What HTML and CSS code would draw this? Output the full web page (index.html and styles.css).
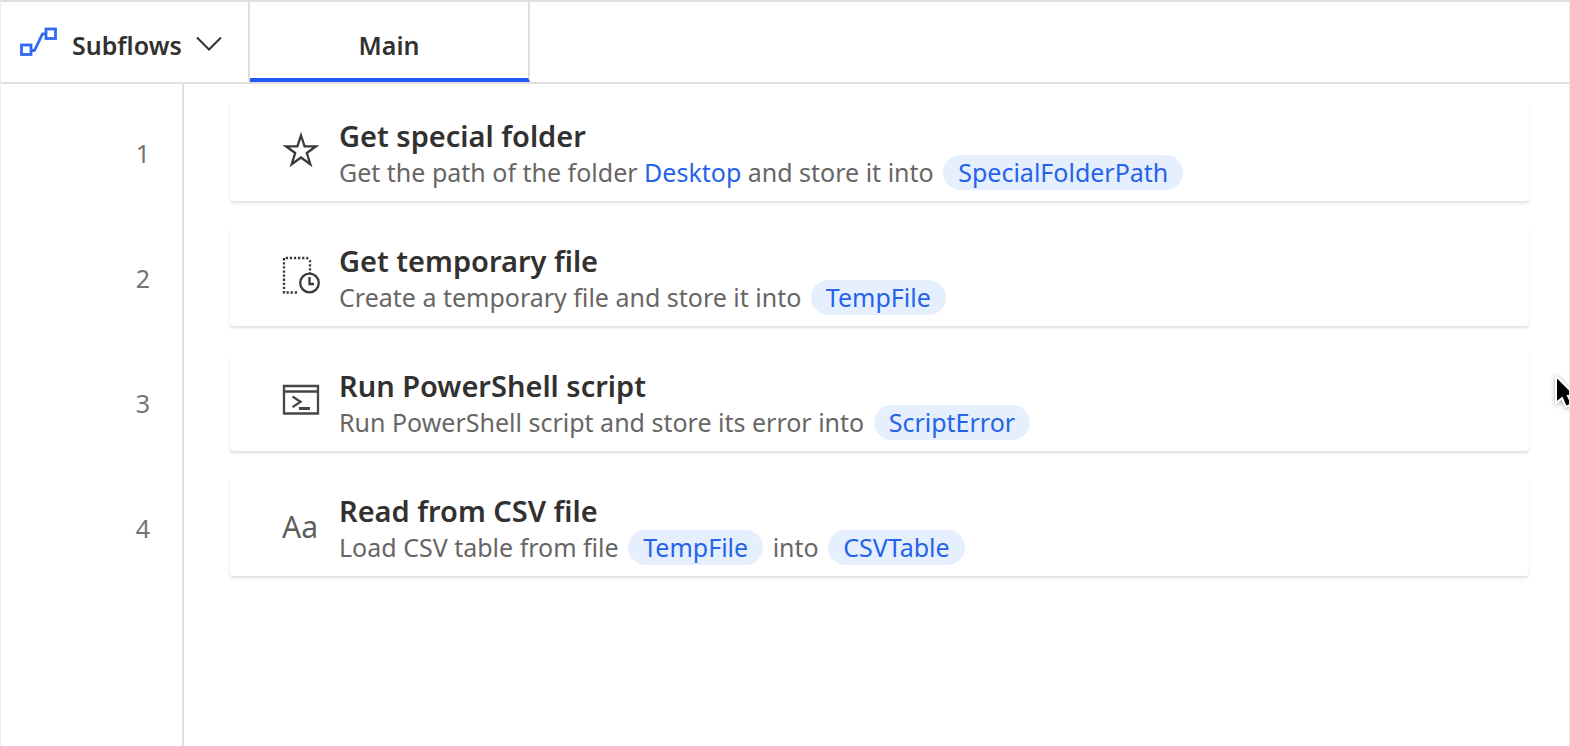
FILE: index.html
```html
<!DOCTYPE html>
<html lang="en">
<head>
<meta charset="utf-8">
<title>Flow designer</title>
<link rel="stylesheet" href="styles.css">
</head>
<body>
<div class="designer">
  <header class="bar">
    <button class="subflows" type="button">
      <svg class="flow-icon" width="38" height="30" viewBox="0 0 38 30" fill="none" stroke="#2f6bf2" stroke-width="2.8" aria-hidden="true">
        <rect x="2.500" y="18" width="9.500" height="9.500"/><rect x="27" y="2" width="9.500" height="9.500"/>
        <path d="M12 23.500h3.500L23.500 6.800H27" stroke-linejoin="round"/>
      </svg>
      <span>Subflows</span>
      <svg class="chevron" width="26" height="16" viewBox="0 0 26 16" fill="none" stroke="#323130" stroke-width="2" aria-hidden="true"><path d="M1 1.500l12 12 12-12"/></svg>
    </button>
    <button class="tab" type="button" aria-current="page">Main</button>
  </header>
  <main class="canvas">
    <ol class="steps">
      <li class="step">
        <span class="number">1</span>
        <article class="card">
          <svg class="icon" width="38" height="38" viewBox="0 0 38 38" fill="none" stroke="#3b3a39" stroke-width="2.300" aria-hidden="true"><path d="M19 4.500l3.600 10.800H34l-9.200 6.700 3.500 11.200L19 26.500l-9.300 6.700L13.200 22 4 15.300h11.400z"/></svg>
          <div class="text">
            <h2>Get special folder</h2>
            <p>Get the path of the folder <a href="#">Desktop</a> and store it into <span class="chip">SpecialFolderPath</span></p>
          </div>
        </article>
      </li>
      <li class="step">
        <span class="number">2</span>
        <article class="card">
          <svg class="icon" width="38" height="38" viewBox="0 0 38 38" fill="none" stroke="#3b3a39" stroke-width="2.300" aria-hidden="true"><path d="M15 36.500H2V2h23l3 3v12" stroke-dasharray="2.300 1.800"/><circle cx="27.500" cy="27" r="9.300"/><path d="M27.500 21v7H32"/></svg>
          <div class="text">
            <h2>Get temporary file</h2>
            <p>Create a temporary file and store it into <span class="chip">TempFile</span></p>
          </div>
        </article>
      </li>
      <li class="step">
        <span class="number">3</span>
        <article class="card">
          <svg class="icon" width="38" height="38" viewBox="0 0 38 38" fill="none" stroke="#484644" stroke-width="2.300" aria-hidden="true"><path d="M2 5h34v27.500H2zM2 10.500h34M10.500 15.500l8 5.300-8 5.300"/><path d="M17 27.500h11" stroke-width="3"/></svg>
          <div class="text">
            <h2>Run PowerShell script</h2>
            <p>Run PowerShell script and store its error into <span class="chip">ScriptError</span></p>
          </div>
        </article>
      </li>
      <li class="step">
        <span class="number">4</span>
        <article class="card">
          <span class="icon letters" aria-hidden="true">Aa</span>
          <div class="text">
            <h2>Read from CSV file</h2>
            <p>Load CSV table from file <span class="chip">TempFile</span> into <span class="chip">CSVTable</span></p>
          </div>
        </article>
      </li>
    </ol>
  </main>
  <svg class="pointer" width="20" height="36" viewBox="0 0 20 36" aria-hidden="true"><path d="M2 2v27l6-5 4 9 6-3-4-8h8z" fill="#000" stroke="#fff" stroke-width="2"/></svg>
</div>
</body>
</html>
```
FILE: styles.css
```css
*, *::after { box-sizing: border-box; }
body {
  margin: 0;
  font-family: "Noto Sans", "Open Sans", sans-serif;
  color: #323130;
  background: #fff;
}
.designer {
  position: relative;
  display: flex;
  flex-direction: column;
  min-height: 100vh;
  overflow: hidden;
  border: 1px solid #ebebeb;
  border-top: 2px solid #e1dfdd;
  border-bottom: 0;
}
.bar {
  display: flex;
  height: 82px;
  border-bottom: 2px solid #e1dfdd;
}
button {
  border: 0;
  border-right: 2px solid #e1dfdd;
  background: none;
  color: inherit;
  font: 600 25px/32px "Noto Sans", "Open Sans", sans-serif;
}
.subflows {
  display: flex;
  align-items: center;
  width: 249px;
  padding: 6px 0 0 18px;
}
.flow-icon { margin: 0 15px 6px 0; }
.chevron { margin: 0 26px 2px auto; }
.tab {
  width: 280px;
  padding: 10px 0 0;
  border-bottom: 4px solid #2458f5;
}
.canvas {
  flex: 1;
  display: flex;
  flex-direction: column;
}
.canvas::after {
  content: "";
  flex: 1;
  width: 183px;
  border-right: 2px solid #e1dfdd;
}
.steps { margin: 0; padding: 0; list-style: none; }
.step {
  display: grid;
  grid-template-columns: 183px 1fr;
}
.number {
  display: flex;
  align-items: center;
  justify-content: flex-end;
  padding: 20px 32px 8px 0;
  border-right: 2px solid #e1dfdd;
  font-size: 25px;
  color: #767472;
}
.card {
  display: flex;
  align-items: center;
  margin: 19px 40px 8px 46px;
  padding: 13px 16px 11px 52px;
  border-radius: 4px;
  box-shadow: 0 2px 3px rgba(0, 0, 0, 0.13);
}
.icon { flex: none; width: 38px; margin: 0 19px 6px 0; }
.letters { margin-bottom: 2px; font-size: 30px; line-height: 38px; color: #605e5c; }
h2 {
  margin: 0;
  font-size: 29px;
  font-weight: 600;
  line-height: 39px;
}
p {
  margin: 0;
  font-size: 25px;
  line-height: 35px;
  color: #686664;
}
a { color: #2563eb; text-decoration: none; }
.chip {
  display: inline-block;
  margin: 0 3px;
  padding: 0 15px;
  border-radius: 18px;
  background: #e6effd;
  color: #2563eb;
}
.pointer {
  position: absolute;
  top: 372px;
  right: -5px;
  filter: drop-shadow(0 1px 2px rgba(0, 0, 0, 0.35));
}
```
